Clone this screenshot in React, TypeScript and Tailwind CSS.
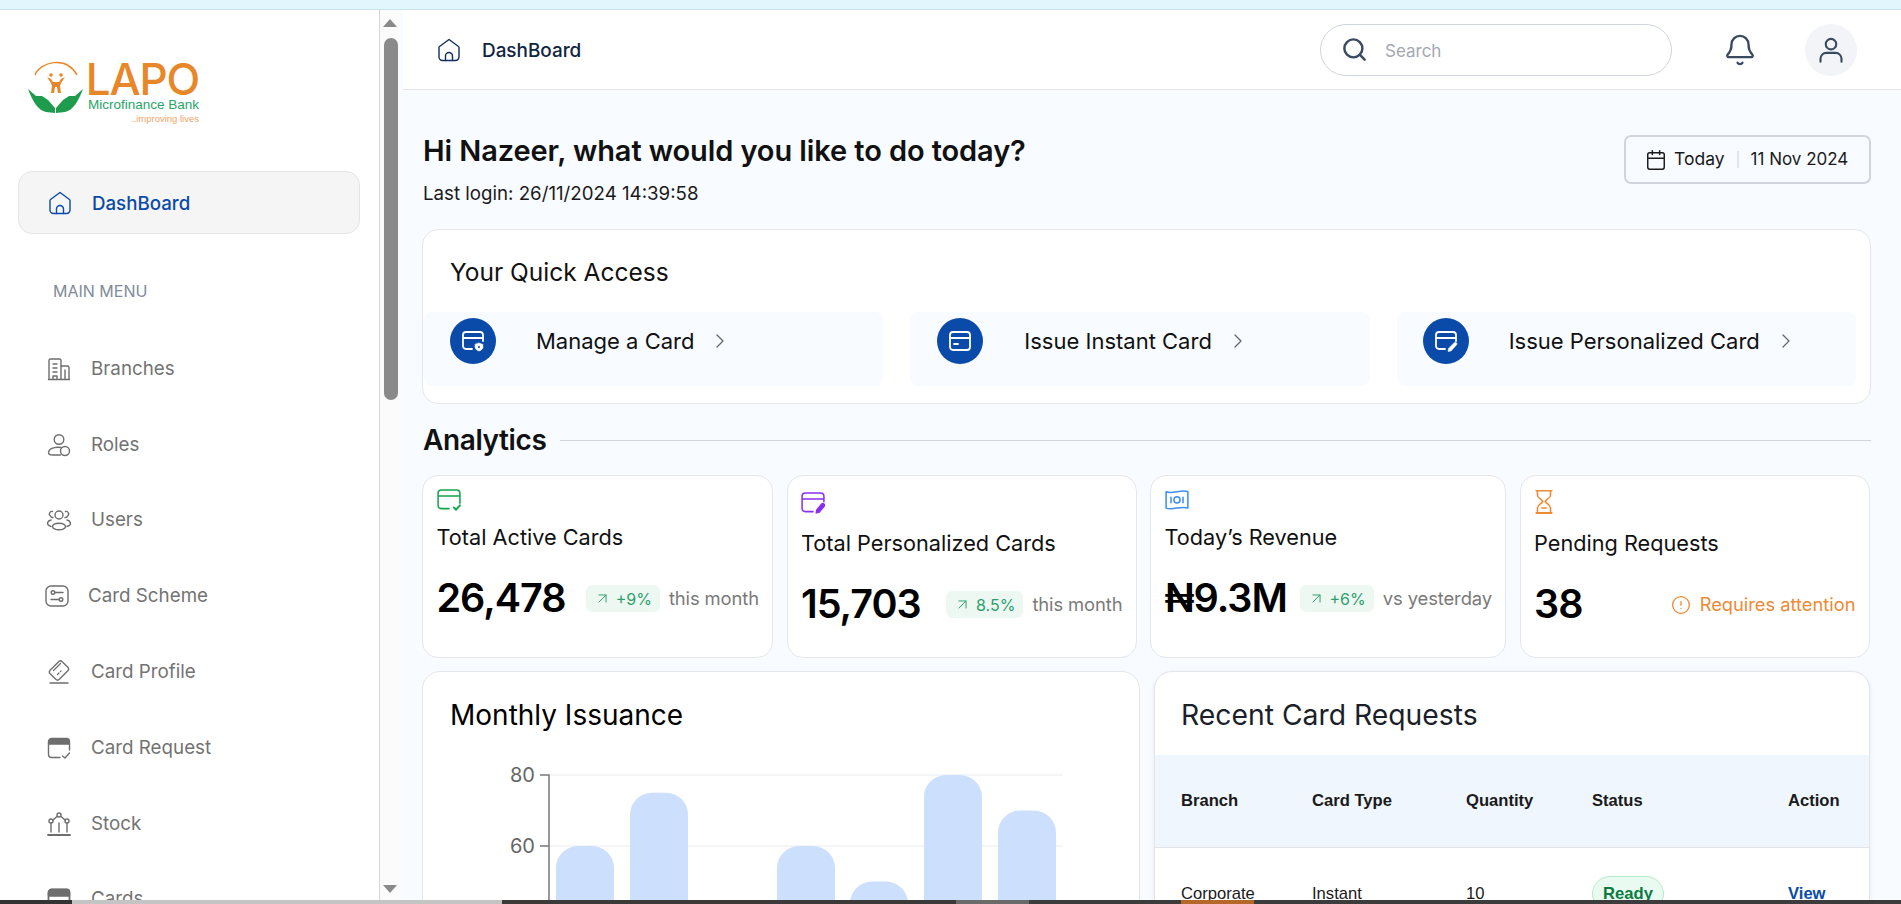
import { ChevronRight, Search, Bell, Calendar, ArrowUpRight, CircleAlert } from 'lucide-react'
import type { ReactNode } from 'react'

function Ico({ children, className, size = 24, box = '0 0 24 24' }: { children: ReactNode; className?: string; size?: number; box?: string }) {
  return (
    <svg width={size} height={size} viewBox={box} fill="none" stroke="currentColor" strokeWidth="1.4" strokeLinecap="round" strokeLinejoin="round" className={className}>
      {children}
    </svg>
  )
}

const HomeIcon = ({ className }: { className?: string }) => (
  <Ico className={className}>
    <path d="M12 1.500 21.500 8.500a1 1 0 0 1 .5 1V19a3.500 3.500 0 0 1-3.500 3.500h-13A3.500 3.500 0 0 1 2 19V9.500a1 1 0 0 1 .5-1Z" />
    <path d="M8.500 22.500V18a3.500 3.500 0 0 1 7 0v4.500" />
  </Ico>
)

const sideIcons: Record<string, ReactNode> = {
  Branches: (
    <Ico>
      <path d="M2 22V3.500A1.500 1.500 0 0 1 3.500 2h9A1.500 1.500 0 0 1 14 3.500V22" />
      <path d="M14 9h6.500A1.500 1.500 0 0 1 22 10.500V22" />
      <path d="M1.500 22.500h21M6 7h4M6 11h4M6 15h4M6 22v-3h4v3M18 13v9" />
    </Ico>
  ),
  Roles: (
    <Ico>
      <circle cx="12" cy="6.500" r="4.800" />
      <path d="M14 14.500a16 16 0 0 0-3-.3c-5 0-9.500 2.300-9.500 5 0 2 2 2.800 4 2.800h8" />
      <circle cx="18" cy="18" r="4.500" />
    </Ico>
  ),
  Users: (
    <Ico>
      <circle cx="12" cy="7" r="4" />
      <ellipse cx="12" cy="18.500" rx="6.500" ry="3.300" />
      <path d="M5.500 3.500A2.500 2.500 0 0 0 3.500 8 2.200 2.200 0 0 0 6 9.500M18.500 3.500A2.500 2.500 0 0 1 20.500 8 2.200 2.200 0 0 1 18 9.500M4 12c-2 .5-3.500 2-3.500 3.500S2 18 4 18.500M20 12c2 .5 3.500 2 3.500 3.500S22 18 20 18.500" />
    </Ico>
  ),
  'Card Scheme': (
    <Ico>
      <rect x="1" y="2" width="22" height="20" rx="5" />
      <circle cx="8" cy="8.500" r="1.800" />
      <path d="M10 8.500h8M6 15.500h8" />
      <circle cx="16" cy="15.500" r="1.800" />
    </Ico>
  ),
  'Card Profile': (
    <Ico>
      <rect x="3.500" y="4" width="17" height="13" rx="2.500" transform="rotate(-45 12 10.500)" />
      <path d="m10.500 14.500 1.500-1.500M13.500 11.500l.5-.5M6.500 10.500l7-7" strokeWidth="1.200" />
      <path d="M3 23h18" />
    </Ico>
  ),
  'Card Request': (
    <Ico>
      <path d="M1.500 8h21V5.500a3 3 0 0 0-3-3h-15a3 3 0 0 0-3 3Z" fill="currentColor" />
      <path d="M1.500 8v10.500a3 3 0 0 0 3 3H13M22.500 8v6" />
      <path d="m15.500 20 2.500 2 4.500-5" />
    </Ico>
  ),
  Stock: (
    <Ico>
      <path d="M1 23h22" strokeWidth="1.800" />
      <path d="M4 11v9M12 11v9M20 11v9M6 8l4-3.500M14 4.500l4 3.500" />
      <circle cx="4" cy="9" r="2" />
      <circle cx="12" cy="3" r="2" />
      <circle cx="20" cy="9" r="2" />
    </Ico>
  ),
  Cards: (
    <Ico>
      <path d="M1.500 9h21V5.500a3 3 0 0 0-3-3h-15a3 3 0 0 0-3 3Z" fill="currentColor" />
      <rect x="1.500" y="2.500" width="21" height="19" rx="3" strokeWidth="1.800" />
    </Ico>
  ),
}

const menu = [
  { label: 'Branches', gap: 'gap-[20px]', left: 'pl-[47px]' },
  { label: 'Roles', gap: 'gap-[20px]', left: 'pl-[47px]' },
  { label: 'Users', gap: 'gap-[20px]', left: 'pl-[47px]' },
  { label: 'Card Scheme', gap: 'gap-[19px]', left: 'pl-[45px]' },
  { label: 'Card Profile', gap: 'gap-[20px]', left: 'pl-[47px]' },
  { label: 'Card Request', gap: 'gap-[20px]', left: 'pl-[47px]' },
  { label: 'Stock', gap: 'gap-[20px]', left: 'pl-[47px]' },
  { label: 'Cards', gap: 'gap-[20px]', left: 'pl-[47px]' },
]

function Logo() {
  return (
    <div className="flex items-start h-[62px] pl-[28px]">
      <svg width="60" height="60" viewBox="0 0 60 60" className="shrink-0 -mt-[1px]">
        <path d="M7 17C12 4 38 -3 49 17" fill="none" stroke="#e8872a" strokeWidth="1.500" />
        <g fill="#e8872a">
          <circle cx="23" cy="17" r="1.800" />
          <circle cx="33" cy="17" r="1.800" />
          <path d="M19 19l4 2 2 3h6l2-3 4-2-4 6-1 3 1 7h-3l-1-6h-2l-1 6h-3l1-7-1-3Z" />
        </g>
        <path d="M0 31 8 38 14 38 20 42 27 50 27 55 18 54C10 52 5 44 0 31Z" fill="#1f9b4d" />
        <path d="M55 31 47 38 41 38 35 42 28 50 28 55 37 54C45 52 50 44 55 31Z" fill="#1f9b4d" />
      </svg>
      <div className="flex flex-col items-end -ml-[1px] w-[112px] font-['Liberation_Sans',sans-serif] leading-none">
        <span className="font-['Inter',sans-serif] font-medium text-[#e8872a] text-[44px] leading-[38px] tracking-[-1.200px] mt-[1px] whitespace-nowrap">LAPO</span>
        <span className="text-[#27a567] text-[13.500px] leading-[13px] whitespace-nowrap">Microfinance Bank</span>
        <span className="text-[#f2a469] text-[9.500px] leading-[12px] mt-[2px] whitespace-nowrap">..improving lives</span>
      </div>
    </div>
  )
}

function Sidebar() {
  return (
    <aside className="w-[380px] shrink-0 border-r border-[#d5d7df] bg-white overflow-hidden font-['Inter',sans-serif]">
      <div className="pt-[49px]">
        <Logo />
      </div>
      <div className="mt-[50px] mx-[18px] w-[342px] h-[63px] flex items-center pl-[29px] gap-[20px] bg-[#f5f5f5] border border-[#e5e5e5] rounded-[14px] text-[#0a4aa8] text-[18.700px] font-medium">
        <HomeIcon />
        <span className="pt-[3px]">DashBoard</span>
      </div>
      <div className="mt-[47px] pl-[53px] text-[16px] leading-[20px] text-[#7f8b9c]">MAIN MENU</div>
      <nav className="mt-[30px]">
        {menu.map((m) => (
          <div key={m.label} className={`h-[75.800px] flex items-center ${m.left} ${m.gap} text-[18.800px] text-[#737373]`}>
            <span className="shrink-0 text-[#6e6e6e]">{sideIcons[m.label]}</span>
            {m.label}
          </div>
        ))}
      </nav>
    </aside>
  )
}

function FakeScrollbar() {
  return (
    <div className="w-[20px] shrink-0 bg-[#fbfbfb] flex flex-col items-center">
      <div className="mt-[9px] w-0 h-0 border-x-[7px] border-x-transparent border-b-[8px] border-b-[#8a8a8a]" />
      <div className="mt-[11px] w-[14px] h-[362px] rounded-full bg-[#8a8a8a] ml-[2px]" />
      <div className="mt-auto mb-[7px] w-0 h-0 border-x-[7px] border-x-transparent border-t-[8px] border-t-[#8a8a8a]" />
    </div>
  )
}

function TopBar() {
  return (
    <header className="h-[80px] shrink-0 bg-white border-b border-[#e2e4e8] flex items-center pl-[34px] pr-[44px] ml-[3px]">
      <HomeIcon className="text-[#12305c]" />
      <span className="ml-[21px] pt-[4px] text-[18.900px] text-[#0f2540] font-medium">DashBoard</span>
      <div className="ml-auto w-[352px] h-[52px] rounded-full border border-[#d0d5dd] bg-white flex items-center pl-[20px]">
        <Search size={27} strokeWidth={2.200} className="text-[#3a4a60]" />
        <span className="ml-[17px] pt-[5px] text-[17px] text-[#a3a8b2]">Search</span>
      </div>
      <Bell size={34} strokeWidth={1.700} className="ml-[51px] text-[#3a4a60]" />
      <div className="ml-[48px] w-[52px] h-[52px] rounded-full bg-[#f2f4f7] flex items-center justify-center text-[#3a4a60]">
        <svg width="28" height="28" viewBox="0 0 24 24" fill="none" stroke="currentColor" strokeWidth="1.800" strokeLinecap="round">
          <circle cx="12" cy="7" r="4.500" />
          <path d="M3 22v-2.500A5 5 0 0 1 8 14.500h8a5 5 0 0 1 5 5V22" />
        </svg>
      </div>
    </header>
  )
}

const quick = [
  {
    label: 'Manage a Card',
    pl: 'pl-[26px]',
    ml: 'ml-[40px]',
    icon: (
      <>
        <path d="M11 20H5a3 3 0 0 1-3-3V6a3 3 0 0 1 3-3h14a3 3 0 0 1 3 3v6M2 9h20" />
        <path d="M18 14l4 1.500V18c0 2-2 3.500-4 4-2-.5-4-2-4-4v-2.500Z" fill="white" stroke="white" strokeWidth="0.500" />
        <circle cx="18" cy="18" r="1" fill="#0a4aa8" stroke="none" />
      </>
    ),
  },
  {
    label: 'Issue Instant Card',
    pl: 'pl-[27px]',
    ml: 'ml-[41px]',
    icon: (
      <>
        <rect x="2" y="3" width="20" height="18" rx="3" />
        <path d="M2 9h20M6 15h4" />
      </>
    ),
  },
  {
    label: 'Issue Personalized Card',
    pl: 'pl-[26px]',
    ml: 'ml-[40px]',
    icon: (
      <>
        <path d="M11 20H5a3 3 0 0 1-3-3V6a3 3 0 0 1 3-3h14a3 3 0 0 1 3 3v6M2 9h20" />
        <path d="M20.500 13.500a1.600 1.600 0 0 1 2.200 2.200L17 22l-3 .5.500-3Z" fill="white" stroke="white" strokeWidth="0.500" />
      </>
    ),
  },
]

function QuickAccess() {
  return (
    <section className="h-[175px] bg-white border border-[#e4e6ea] rounded-[16px] pt-[26px] pl-px pr-[14px] shrink-0">
      <h2 className="pl-[26px] text-[24.500px] leading-[32px] text-[#111111]">Your Quick Access</h2>
      <div className="mt-[24px] grid grid-cols-3 gap-[27px]">
        {quick.map((q) => (
          <div key={q.label} className={`h-[74px] bg-[#f8fbff] rounded-[8px] ${q.pl} pt-[6px] flex items-start`}>
            <div className="w-[46px] h-[46px] rounded-full bg-[#0a4aa8] flex items-center justify-center">
              <svg width="24" height="24" viewBox="0 0 24 24" fill="none" stroke="white" strokeWidth="1.800" strokeLinecap="round" strokeLinejoin="round">
                {q.icon}
              </svg>
            </div>
            <span className={`${q.ml} h-[46px] flex items-center text-[22px] text-[#111111]`}>{q.label}</span>
            <ChevronRight size={24} strokeWidth={1.300} className="ml-[14px] mt-[11px] text-[#666666]" />
          </div>
        ))}
      </div>
    </section>
  )
}

function Trend({ value }: { value: string }) {
  return (
    <span className="h-[27px] px-[8px] rounded-[6px] bg-[#eef8f3] text-[#2f9e6e] text-[16px] flex items-center gap-[5px] whitespace-nowrap">
      <ArrowUpRight size={17} strokeWidth={1.400} />
      {value}
    </span>
  )
}

const statBox = '1 2 22 22'

const stats = [
  {
    title: 'Total Active Cards',
    value: '26,478',
    pt: 'pt-[13px]',
    mt: 'mt-[9px]',
    trend: '+9%',
    note: 'this month',
    icon: (
      <Ico box={statBox} className="text-[#16a34a]">
        <path d="M12 20H5a3 3 0 0 1-3-3V6a3 3 0 0 1 3-3h14a3 3 0 0 1 3 3v9M2 8.500h20" />
        <path d="m16.500 19 2 2 3.500-4" strokeWidth="1.800" />
      </Ico>
    ),
  },
  {
    title: 'Total Personalized Cards',
    value: '15,703',
    pt: 'pt-[16px]',
    mt: 'mt-[12px]',
    trend: '8.5%',
    note: 'this month',
    icon: (
      <Ico box={statBox} className="text-[#8b2ff0]">
        <path d="M12 20H5a3 3 0 0 1-3-3V6a3 3 0 0 1 3-3h14a3 3 0 0 1 3 3v5M2 8.500h20" />
        <path d="M20 13a1.500 1.500 0 0 1 2.200 2L17.500 20.500l-2.500.5.500-2.500Z" fill="currentColor" />
      </Ico>
    ),
  },
  {
    title: 'Today’s Revenue',
    value: '₦9.3M',
    pt: 'pt-[13px]',
    mt: 'mt-[9px]',
    trend: '+6%',
    note: 'vs yesterday',
    icon: (
      <Ico box={statBox} className="text-[#3b8ff0]">
        <path d="M2 4.500c6 2.500 14-2.500 20 0v15c-6-2.500-14 2.500-20 0Z" />
        <circle cx="12" cy="12" r="2.800" />
        <path d="M6.500 9.500v5M17.500 9.500v5" />
      </Ico>
    ),
  },
  {
    title: 'Pending Requests',
    value: '38',
    pt: 'pt-[14px]',
    mt: 'mt-[14px]',
    icon: (
      <Ico box={statBox} className="text-[#ee8a33] -ml-[2px]">
        <path d="M5 2.500h14M5 23h14" strokeWidth="1.800" />
        <path d="M6 2.500v4c0 3 4 4 5 6-1 2-5 3-5 6V23M18 2.500v4c0 3-4 4-5 6 1 2 5 3 5 6V23M10 18.500h4" />
      </Ico>
    ),
  },
]

function StatCards() {
  return (
    <div className="mt-[17px] h-[183px] shrink-0 grid grid-cols-[351px_350px_356px_350px] gap-[13.500px]">
      {stats.map((s) => (
        <div key={s.title} className={`bg-white border border-[#e4e6ea] rounded-[16px] pl-[13.500px] pr-[13px] ${s.pt}`}>
          <div className="h-[24px]">{s.icon}</div>
          <h3 className={`${s.mt} text-[21.700px] leading-[30px] text-[#111111] whitespace-nowrap`}>{s.title}</h3>
          <div className="mt-[22px] h-[50px] flex items-center justify-between">
            <span className="text-[39.500px] font-semibold text-black tracking-[-1px]">{s.value}</span>
            {s.trend ? (
              <div className="flex items-center gap-[9px]">
                <Trend value={s.trend} />
                <span className="text-[18.400px] text-[#7a7a7a] tracking-[-0.100px] whitespace-nowrap">{s.note}</span>
              </div>
            ) : (
              <div className="flex items-center gap-[9px] text-[#ee8a33] text-[18.300px]">
                <CircleAlert size={20} strokeWidth={1.600} />
                Requires attention
              </div>
            )}
          </div>
        </div>
      ))}
    </div>
  )
}

const bars = [
  { x: 133, top: 60 },
  { x: 207, top: 75 },
  { x: 354, top: 60 },
  { x: 427, top: 50 },
  { x: 501, top: 80 },
  { x: 575, top: 70 },
]

function MonthlyIssuance() {
  const y = (v: number) => 15 + (80 - v) * 3.55
  return (
    <section className="bg-white border border-[#e4e6ea] rounded-[18px] h-[400px]">
      <h2 className="pt-[25px] pl-[27px] text-[28px] leading-[36px] text-black">Monthly Issuance</h2>
      <svg width="716" height="300" viewBox="0 0 716 300" className="mt-[27px] block">
        <path d={`M126 ${y(80)}H640M126 ${y(60)}H640`} stroke="#f1f2f4" strokeWidth="1.500" />
        {bars.map((b) => (
          <path key={b.x} d={`M${b.x} 300V${y(b.top) + 22}a22 22 0 0 1 22-22h14a22 22 0 0 1 22 22V300Z`} fill="#cce0fd" />
        ))}
        <path d={`M117 ${y(80)}H126V300M117 ${y(60)}H126`} fill="none" stroke="#777777" strokeWidth="1.500" />
        <text x="112" y={y(80) + 7} textAnchor="end" fontSize="20" fill="#666666" fontFamily="Inter, sans-serif">80</text>
        <text x="112" y={y(60) + 7} textAnchor="end" fontSize="20" fill="#666666" fontFamily="Inter, sans-serif">60</text>
      </svg>
    </section>
  )
}

function RecentRequests() {
  return (
    <section className="bg-white rounded-[18px] border border-[#e4e6ea] shadow-[0_1px_4px_rgba(0,0,0,0.08)] h-[400px] overflow-hidden">
      <h2 className="pt-[25px] pl-[26px] text-[28.300px] leading-[36px] text-[#1b1f2a]">Recent Card Requests</h2>
      <div className="mt-[22px] font-['Liberation_Sans',sans-serif]">
        <div className="h-[93px] bg-[#f0f6fe] border-b border-[#e2e4e8] grid grid-cols-[131px_154px_126px_196px_1fr] items-center pl-[26px] text-[16.600px] font-bold text-[#1a1a1a]">
          <span>Branch</span>
          <span>Card Type</span>
          <span>Quantity</span>
          <span>Status</span>
          <span>Action</span>
        </div>
        <div className="h-[92px] grid grid-cols-[131px_154px_126px_196px_1fr] items-center pl-[26px] text-[16.600px] text-[#1a1a1a]">
          <span>Corporate</span>
          <span>Instant</span>
          <span>10</span>
          <span className="w-[72px] h-[36px] rounded-full bg-[#e9fbf1] border border-[#b4eccb] text-[#0d7a43] font-bold flex items-center justify-center">Ready</span>
          <span className="text-[#0a4aa8] font-bold">View</span>
        </div>
      </div>
    </section>
  )
}

export default function App() {
  return (
    <div className="w-[1901px] h-[904px] overflow-hidden flex flex-col bg-white font-['Inter',sans-serif]">
      <div className="h-[10px] shrink-0 bg-[#e2f6fe] border-b border-[#c9e3ee]" />
      <div className="flex-1 min-h-0 flex">
        <Sidebar />
        <FakeScrollbar />
        <main className="flex-1 min-w-0 flex flex-col bg-[#f8fbff] overflow-hidden">
          <TopBar />
          <div className="flex-1 min-h-0 pl-[22px] pr-[30px] overflow-hidden flex flex-col">
            <div className="flex justify-between items-start pt-[43px] shrink-0">
              <div className="pl-px">
                <h1 className="text-[29px] leading-[36px] font-semibold text-[#111111] tracking-[-0.100px]">Hi Nazeer, what would you like to do today?</h1>
                <p className="mt-[13px] text-[18.700px] leading-[24px] text-[#1a1a1a]">Last login: 26/11/2024 14:39:58</p>
              </div>
              <div className="mt-[2px] w-[247px] h-[49px] border-2 border-[#d0d5dd] rounded-[7px] flex items-center pl-[19px] text-[#1a1a1a]">
                <Calendar size={22} strokeWidth={1.600} />
                <span className="ml-[7px] text-[17.500px]">Today</span>
                <span className="ml-[12px] w-[2px] h-[17px] bg-[#e2e4e8]" />
                <span className="ml-[12px] text-[17px] whitespace-nowrap">11 Nov 2024</span>
              </div>
            </div>
            <div className="mt-[23px]">
              <QuickAccess />
            </div>
            <div className="mt-[18px] h-[36px] shrink-0 flex items-center gap-[14px]">
              <h2 className="pl-px text-[28px] font-semibold text-[#111111] tracking-[-0.400px]">Analytics</h2>
              <div className="flex-1 h-px bg-[#d1d5db]" />
            </div>
            <StatCards />
            <div className="mt-[13px] grid grid-cols-[718px_716px] gap-[14px]">
              <MonthlyIssuance />
              <RecentRequests />
            </div>
          </div>
        </main>
      </div>
      <div className="h-[4px] shrink-0 flex">
        <div className="w-[72px] bg-[#333333]" />
        <div className="w-[430px] bg-[#c4c4c4]" />
        <div className="w-[454px] bg-[#3c3a38]" />
        <div className="w-[73px] bg-[#6a6a6a]" />
        <div className="w-[152px] bg-[#3c3c3c]" />
        <div className="w-[73px] bg-[#b5682a]" />
        <div className="flex-1 bg-[#3c3c3c]" />
      </div>
    </div>
  )
}
